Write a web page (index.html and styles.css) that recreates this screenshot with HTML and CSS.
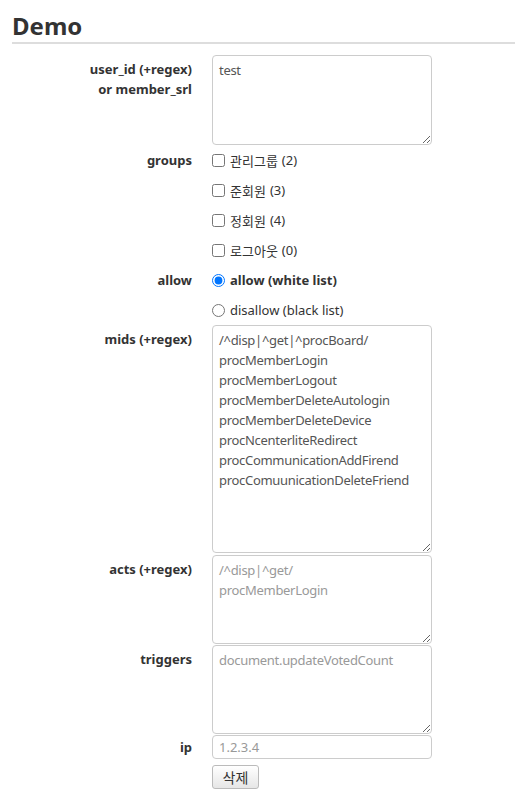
FILE: index.html
```html
<!DOCTYPE html>
<html>

<head>
    <title>Demo</title>
    <meta name="viewport" content="width=device-width, initial-scale=1.0">
    <link rel="stylesheet" href="styles.css">
</head>

<body>
    <h1 class="title">Demo</h1>
    <form class="form">
        <div class="row">
            <label class="label">user_id (+regex)<br>or member_srl</label>
            <div class="field">
                <textarea class="box box-small">test</textarea>
            </div>
        </div>

        <div class="row">
            <label class="label label-line">groups</label>
            <div class="field">
                <label class="option"><input type="checkbox"> 관리그룹 <span class="count">(2)</span></label>
                <label class="option"><input type="checkbox"> 준회원 <span class="count">(3)</span></label>
                <label class="option"><input type="checkbox"> 정회원 <span class="count">(4)</span></label>
                <label class="option"><input type="checkbox"> 로그아웃 <span class="count">(0)</span></label>
            </div>
        </div>

        <div class="row">
            <label class="label label-line">allow</label>
            <div class="field">
                <label class="option option-bold"><input type="radio" name="allow" checked> allow (white list)</label>
                <label class="option"><input type="radio" name="allow"> disallow (black list)</label>
            </div>
        </div>

        <div class="row">
            <label class="label">mids (+regex)</label>
            <div class="field">
                <textarea class="box box-large">/^disp|^get|^procBoard/
procMemberLogin
procMemberLogout
procMemberDeleteAutologin
procMemberDeleteDevice
procNcenterliteRedirect
procCommunicationAddFirend
procComuunicationDeleteFriend</textarea>
            </div>
        </div>

        <div class="row row-tight">
            <label class="label">acts (+regex)</label>
            <div class="field">
                <textarea class="box box-small" placeholder="/^disp|^get/&#10;procMemberLogin"></textarea>
            </div>
        </div>

        <div class="row row-tight">
            <label class="label">triggers</label>
            <div class="field">
                <textarea class="box box-small" placeholder="document.updateVotedCount"></textarea>
            </div>
        </div>

        <div class="row row-tight">
            <label class="label label-input">ip</label>
            <div class="field">
                <input class="text" type="text" placeholder="1.2.3.4">
            </div>
        </div>

        <div class="row row-button">
            <span class="label"></span>
            <div class="field">
                <button type="button" class="button">삭제</button>
            </div>
        </div>
    </form>
</body>

</html>
```

FILE: styles.css
```css
body {
    font-family: 'Noto Sans', 'Noto Sans CJK KR', sans-serif;
    font-size: 13px;
    color: #333;
    margin: 0;
    padding: 0 0 0 12px;
}

.title {
    font-size: 24px;
    font-weight: bold;
    color: #333;
    margin: 0;
    padding: 12px 0 2px 0;
    line-height: 28px;
    border-bottom: 2px solid #ddd;
}

.form {
    margin-top: 11px;
}

.row {
    display: grid;
    grid-template-columns: 180px 220px;
    column-gap: 20px;
}

.row-tight {
    margin-top: 1px;
}

.row-button {
    margin-top: 6px;
}

.label {
    text-align: right;
    font-weight: bold;
    line-height: 20px;
    padding-top: 4px;
}

.label-line {
    line-height: 30px;
    padding-top: 0;
}

.label-input {
    padding-top: 2px;
}

.field {
    display: flex;
    flex-direction: column;
    align-items: flex-start;
}

.box {
    width: 220px;
    box-sizing: border-box;
    font-family: inherit;
    font-size: 13px;
    letter-spacing: -0.3px;
    line-height: 20px;
    color: #555;
    padding: 4px 6px 6px 6px;
    border: 1px solid #ccc;
    border-radius: 4px;
    margin: 0;
}

.box::placeholder,
.text::placeholder {
    color: #999;
}

.box-small {
    height: 89px;
}

.row:first-child .box-small {
    height: 90px;
}

.box-large {
    height: 228px;
    margin-bottom: 1px;
}

.option {
    display: flex;
    align-items: center;
    height: 30px;
    color: #333;
}

.option input {
    margin: 0 5px 0 0;
    width: 13px;
    height: 13px;
}

.option-bold {
    font-weight: bold;
}

.count {
    margin-left: 4px;
}

.text {
    width: 220px;
    height: 24px;
    box-sizing: border-box;
    font-family: inherit;
    font-size: 13px;
    color: #555;
    padding: 2px 6px;
    border: 1px solid #ccc;
    border-radius: 4px;
    margin: 0;
}

.button {
    font-family: inherit;
    font-size: 14px;
    color: #333;
    width: 47px;
    height: 24px;
    padding: 0;
    border: 1px solid #bbb;
    border-radius: 3px;
    background: linear-gradient(#fff, #e6e6e6);
    cursor: pointer;
}
```
